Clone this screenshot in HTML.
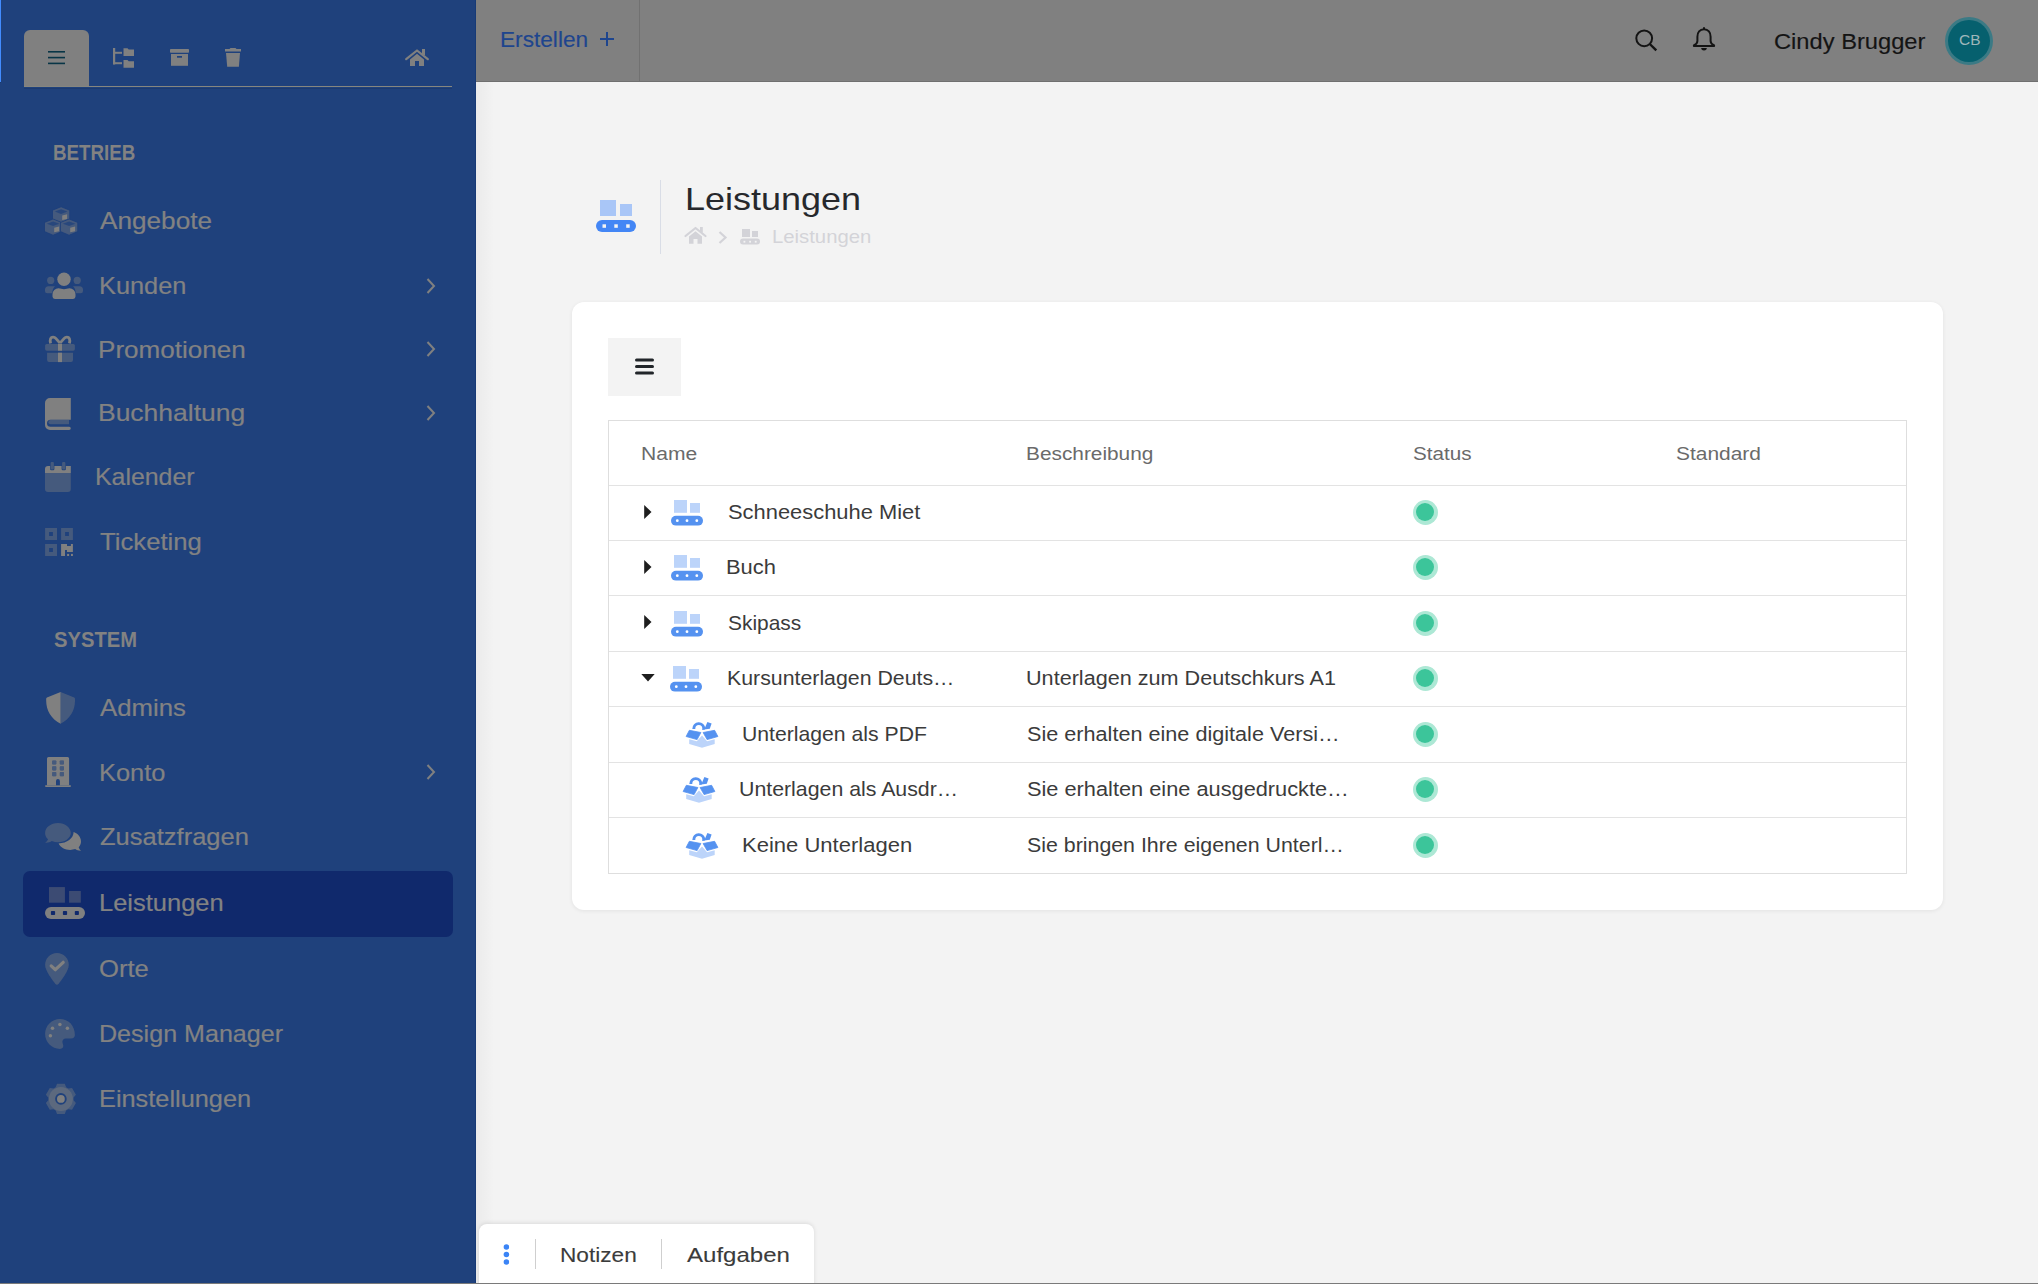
<!DOCTYPE html>
<html><head><meta charset="utf-8"><title>Leistungen</title>
<style>
html,body{margin:0;padding:0;width:2038px;height:1284px;overflow:hidden;background:#f3f3f3;font-family:"Liberation Sans",sans-serif}
.sb{position:absolute;left:0;top:0;width:476px;height:1284px;background:#1f417c}
.t{position:absolute;white-space:nowrap;transform-origin:0 0}
.i{position:absolute;overflow:visible}
</style></head><body>
<div style="position:absolute;left:476px;top:82px;width:18px;height:1202px;background:linear-gradient(to right,rgba(0,0,0,0.035),rgba(0,0,0,0))"></div>
<div class="sb"></div>
<div style="position:absolute;left:475px;top:0;width:1px;height:1284px;background:#173a76"></div>
<div style="position:absolute;left:0;top:0;width:1px;height:82px;background:#428cff"></div><div style="position:absolute;left:0;top:82px;width:1px;height:1px;background:#1a3a70"></div>
<div style="position:absolute;left:24px;top:30px;width:65px;height:57px;background:#808080;border-radius:6px 6px 0 0"></div>
<div style="position:absolute;left:24px;top:86px;width:428px;height:1px;background:#86867f"></div><div style="position:absolute;left:24px;top:88px;width:428px;height:1px;background:#1c3a6f"></div>
<svg class="i" style="left:47px;top:50px" width="19" height="15" viewBox="0 0 19 15" ><g fill="#083546"><rect x="1" y="1" width="17" height="1.6"/><rect x="1" y="6.8" width="17" height="1.6"/><rect x="1" y="12.6" width="17" height="1.6"/></g></svg>
<svg class="i" style="left:112px;top:47px" width="24" height="22" viewBox="0 0 24 22" ><g fill="#808080"><rect x="1" y="1" width="2.2" height="16.5"/><rect x="1" y="4.8" width="9" height="2"/><rect x="1" y="15.2" width="9" height="2"/><path d="M11.5 1.2h4l1.2 1.2h5.3v6.6h-10.5z"/><path d="M11.5 13h4l1.2 1.2h5.3v6.6h-10.5z"/></g></svg>
<svg class="i" style="left:169px;top:48px" width="21" height="19" viewBox="0 0 21 19" ><g fill="#808080"><rect x="1" y="1" width="19" height="3.7" rx="0.8"/><path d="M2 6h17v11.8H2z"/><rect x="8" y="8" width="5" height="1.7" fill="#1f417c"/></g></svg>
<svg class="i" style="left:224px;top:47px" width="18" height="21" viewBox="0 0 18 21" ><g fill="#808080"><path d="M1 2h4.5l1-1h5l1 1h4.5v2.6H1z"/><path d="M2 6h14l-1.1 13.8H3.2z"/></g></svg>
<svg class="i" style="left:405px;top:48px" width="24" height="19" viewBox="0 0 24 19" ><g fill="#808080"><path d="M1.2 11.2 L12 2.5 L22.8 11.2" fill="none" stroke="#808080" stroke-width="2.2" stroke-linecap="round" stroke-linejoin="round"/><rect x="17" y="1" width="3" height="6"/><path d="M5 11.5 L12 5.8 L19 11.5 V18 H14 V13 H10 V18 H5z"/></g></svg>
<svg class="i" style="left:40px;top:200px" width="50" height="40" viewBox="0 0 50 40"><path d="M21.1 7.2 L29.25 10.6 V19.1 L21.1 22.5 L12.950000000000001 19.1 V10.6z" fill="#1f417c" stroke="#1f417c" stroke-width="1.6" stroke-linejoin="round"/><path d="M21.1 7.2 L29.25 10.6 V19.1 L21.1 22.5 L12.950000000000001 19.1 V10.6z" fill="#808080" fill-opacity="0.4"/><path d="M21.1 9.2 L27.400000000000002 11.5 L21.1 13.9 L14.8 11.5z" fill="#1f417c" fill-opacity="0.75"/><path d="M22.200000000000003 15.5 L27.1 14.3 V19.0 L22.200000000000003 20.1z" fill="#808080"/><path d="M13.1 19.4 L21.25 22.799999999999997 V31.299999999999997 L13.1 34.7 L4.949999999999999 31.299999999999997 V22.799999999999997z" fill="#1f417c" stroke="#1f417c" stroke-width="1.6" stroke-linejoin="round"/><path d="M13.1 19.4 L21.25 22.799999999999997 V31.299999999999997 L13.1 34.7 L4.949999999999999 31.299999999999997 V22.799999999999997z" fill="#808080" fill-opacity="0.4"/><path d="M13.1 21.4 L19.4 23.7 L13.1 26.099999999999998 L6.8 23.7z" fill="#1f417c" fill-opacity="0.75"/><path d="M14.2 27.7 L19.1 26.5 V31.2 L14.2 32.3z" fill="#808080"/><path d="M29.1 19.4 L37.25 22.799999999999997 V31.299999999999997 L29.1 34.7 L20.950000000000003 31.299999999999997 V22.799999999999997z" fill="#1f417c" stroke="#1f417c" stroke-width="1.6" stroke-linejoin="round"/><path d="M29.1 19.4 L37.25 22.799999999999997 V31.299999999999997 L29.1 34.7 L20.950000000000003 31.299999999999997 V22.799999999999997z" fill="#808080" fill-opacity="0.4"/><path d="M29.1 21.4 L35.4 23.7 L29.1 26.099999999999998 L22.8 23.7z" fill="#1f417c" fill-opacity="0.75"/><path d="M30.200000000000003 27.7 L35.1 26.5 V31.2 L30.200000000000003 32.3z" fill="#808080"/></svg>
<svg class="i" style="left:40px;top:265px" width="50" height="40" viewBox="0 0 50 40"><g fill="#808080" fill-opacity="0.4"><circle cx="10.7" cy="15.4" r="3.6"/><circle cx="37.2" cy="15.4" r="3.6"/><path d="M8.5 21.2h6.5c-1.6 1.5-2.6 3.5-2.8 7H7.2a2.2 2.2 0 0 1 -2.2-2.2v-1.3a3.5 3.5 0 0 1 3.5-3.5z"/><path d="M39.5 21.2h-6.5c1.6 1.5 2.6 3.5 2.8 7h5a2.2 2.2 0 0 0 2.2-2.2v-1.3a3.5 3.5 0 0 0 -3.5-3.5z"/></g><g fill="#808080"><circle cx="24" cy="14.3" r="6.7"/><path d="M18.5 23.2c2 0 3.5 1 5.5 1s3.5-1 5.5-1a6 6 0 0 1 6 6v2.4a2.4 2.4 0 0 1 -2.4 2.4H14.9a2.4 2.4 0 0 1 -2.4-2.4v-2.4a6 6 0 0 1 6-6z"/></g></svg>
<svg class="i" style="left:40px;top:330px" width="50" height="40" viewBox="0 0 50 40"><g fill="#808080" fill-opacity="0.4"><rect x="5.1" y="13.9" width="29.8" height="6.8" rx="1.6"/><path d="M7.1 22.7h25.9v7.4a2 2 0 0 1 -2 2H9.1a2 2 0 0 1 -2-2z"/></g><g fill="#808080"><rect x="18" y="14" width="4" height="6.7"/><rect x="18" y="22.7" width="4" height="9.4"/><path d="M20 13.2 L15.8 8.3 C14.5 6.8 11.5 6.6 10.6 8.6 C10 10 10.3 12.2 10.6 13.3" fill="none" stroke="#808080" stroke-width="2.8"/><path d="M20 13.2 L24.2 8.3 C25.5 6.8 28.5 6.6 29.4 8.6 C30 10 29.7 12.2 29.4 13.3" fill="none" stroke="#808080" stroke-width="2.8"/></g></svg>
<svg class="i" style="left:40px;top:393px" width="50" height="40" viewBox="0 0 50 40"><path d="M10 5h20.8v21.7H10.5a3.5 3.5 0 0 0 -3.5 3.5 3.5 3.5 0 0 0 3.5 3.5H29.2a1.6 1.6 0 0 1 0 3.2H10a5 5 0 0 1 -5-5V10a5 5 0 0 1 5-5z" fill="#808080"/><path d="M10.5 27.1h18.5v4.1H10.5a2.05 2.05 0 0 1 0-4.1z" fill="#808080" fill-opacity="0.4"/></svg>
<svg class="i" style="left:40px;top:457px" width="50" height="40" viewBox="0 0 50 40"><path d="M5 18h25.8v13.9a3 3 0 0 1 -3 3H8a3 3 0 0 1 -3-3z" fill="#808080" fill-opacity="0.4"/><path d="M8 8.9h22.8a0 0 0 0 1 0 0V16H5V11.9a3 3 0 0 1 3-3z" fill="#808080"/><rect x="10.1" y="4.6" width="4.3" height="8.6" rx="1.2" fill="#1f417c"/><rect x="21.6" y="4.6" width="4.3" height="8.6" rx="1.2" fill="#1f417c"/><rect x="10.6" y="5.1" width="3.3" height="7.5" rx="1" fill="#808080" fill-opacity="0.4"/><rect x="22.1" y="5.1" width="3.3" height="7.5" rx="1" fill="#808080" fill-opacity="0.4"/><path d="M5 16h25.8v2H5z" fill="#808080" fill-opacity="0.4"/></svg>
<svg class="i" style="left:40px;top:522px" width="50" height="40" viewBox="0 0 50 40"><g fill="#808080" fill-opacity="0.4" fill-rule="evenodd"><path d="M5.1 6h11.9v11.9H5.1z M9.1 10v3.9h3.8V10z"/><path d="M21.1 6h11.8v11.9H21.1z M25.1 10v3.9h3.8V10z"/><path d="M5.1 22.1h11.9v11.9H5.1z M9.1 26.1v3.9h3.8v-3.9z"/></g><g fill="#808080"><path d="M21.1 22.1h5.9v1.9h3.9v-1.9h2v7.8H27v-1.9h-2v6h-3.9z"/><rect x="27.1" y="31.9" width="2" height="2.1"/><rect x="31" y="31.9" width="1.9" height="2.1"/></g></svg>
<svg class="i" style="left:40px;top:688px" width="50" height="40" viewBox="0 0 50 40"><path d="M20.6 4 L7 9.6 C6 10 6.2 11 6.2 13 C6.2 22 11 31 20.6 35.8z" fill="#808080"/><path d="M20.6 4 L34.2 9.6 C35.2 10 35 11 35 13 C35 22 30.2 31 20.6 35.8z" fill="#808080" fill-opacity="0.4"/></svg>
<svg class="i" style="left:40px;top:752px" width="50" height="40" viewBox="0 0 50 40"><path d="M8.5 5h19.1a1.5 1.5 0 0 1 1.5 1.5V33.2H7V6.5A1.5 1.5 0 0 1 8.5 5z" fill="#808080"/><rect x="5" y="33.2" width="26" height="1.7" rx="0.8" fill="#808080"/><rect x="12.1" y="8.4" width="4.2" height="4.1" rx="0.8" fill="#1f417c"/><rect x="12.1" y="8.4" width="4.2" height="4.1" rx="0.8" fill="#808080" fill-opacity="0.4"/><rect x="19.8" y="8.4" width="4.2" height="4.1" rx="0.8" fill="#1f417c"/><rect x="19.8" y="8.4" width="4.2" height="4.1" rx="0.8" fill="#808080" fill-opacity="0.4"/><rect x="12.1" y="14.3" width="4.2" height="4.1" rx="0.8" fill="#1f417c"/><rect x="12.1" y="14.3" width="4.2" height="4.1" rx="0.8" fill="#808080" fill-opacity="0.4"/><rect x="19.8" y="14.3" width="4.2" height="4.1" rx="0.8" fill="#1f417c"/><rect x="19.8" y="14.3" width="4.2" height="4.1" rx="0.8" fill="#808080" fill-opacity="0.4"/><rect x="12.1" y="20.1" width="4.2" height="4.1" rx="0.8" fill="#1f417c"/><rect x="12.1" y="20.1" width="4.2" height="4.1" rx="0.8" fill="#808080" fill-opacity="0.4"/><rect x="19.8" y="20.1" width="4.2" height="4.1" rx="0.8" fill="#1f417c"/><rect x="19.8" y="20.1" width="4.2" height="4.1" rx="0.8" fill="#808080" fill-opacity="0.4"/><path d="M16 33.2V29a1.9 1.9 0 0 1 3.9 0v4.2z" fill="#1f417c"/></svg>
<svg class="i" style="left:40px;top:817px" width="50" height="40" viewBox="0 0 50 40"><path d="M18 6.1c-7.1 0-12.9 4.4-12.9 9.9 0 2.4 1.1 4.6 2.9 6.3-.5 1.5-1.6 2.7-2.9 3.4 2.5.3 5-.4 6.7-1.6 1.9.8 4 1.2 6.2 1.2 7.1 0 12.8-4.4 12.8-9.3S25.1 6.1 18 6.1z" fill="#808080" fill-opacity="0.4"/><path d="M33.6 15.1c4.5 1.6 7.4 5.3 7.4 9.3 0 2.2-.8 4.2-2.3 5.8.4 1.4 1.3 2.7 2.3 3.6-2.2.1-4.3-.6-5.8-1.7-1.5.5-3.2.8-5 .8-5.3 0-9.6-2.5-11.6-6.4 8.5-.3 14.9-5 15-11.4z" fill="#808080"/></svg>
<div style="position:absolute;left:23px;top:871px;width:430px;height:66px;background:#10296c;border-radius:7px"></div>
<svg class="i" style="left:40px;top:882px" width="50" height="40" viewBox="0 0 50 40"><rect x="9" y="5.1" width="15.9" height="15.6" fill="#808080" fill-opacity="0.4"/><rect x="29.1" y="9" width="11.7" height="11.7" fill="#808080" fill-opacity="0.4"/><rect x="5" y="24.9" width="40" height="12" rx="6" fill="#808080"/><g fill="#10296c"><rect x="10.9" y="29" width="4.2" height="4" rx="0.8"/><rect x="22.9" y="29" width="4.2" height="4" rx="0.8"/><rect x="34.8" y="29" width="4.1" height="4" rx="0.8"/></g></svg>
<svg class="i" style="left:40px;top:948px" width="50" height="40" viewBox="0 0 50 40"><path d="M17 5.1C10.4 5.1 5.1 10.4 5.1 17c0 5.4 7.4 15.3 10.3 19 .8 1 2.3 1 3.1 0 2.9-3.7 10.3-13.6 10.3-19C28.8 10.4 23.5 5.1 17 5.1z" fill="#808080" fill-opacity="0.4"/><path d="M11.2 17.9 L15.4 21.7 L23.2 14.3" fill="none" stroke="#808080" stroke-width="3.2" stroke-linecap="round" stroke-linejoin="round"/></svg>
<svg class="i" style="left:40px;top:1014px" width="50" height="40" viewBox="0 0 50 40"><path d="M20 5C11.7 5 5.1 11.7 5.1 20c0 8.2 6.7 14.9 14.9 14.9 2.2 0 3.3-1.4 3.3-3.1 0-1.3-.9-2.6-.9-4 0-1.8 1.4-3.2 3.2-3.2h5.4c2.6 0 3.9-1.6 3.9-3.5C34.9 11.3 28.2 5 20 5z" fill="#808080" fill-opacity="0.4"/><g fill="#808080"><circle cx="19.9" cy="10.6" r="1.75"/><circle cx="12.5" cy="14.3" r="1.75"/><circle cx="27.4" cy="14.3" r="1.75"/><circle cx="10.4" cy="21.8" r="1.75"/></g></svg>
<svg class="i" style="left:40px;top:1079px" width="50" height="40" viewBox="0 0 50 40"><polygon points="15.70,8.30 17.00,4.80 24.80,4.80 26.10,8.30 28.35,9.60 32.03,8.97 35.93,15.73 33.55,18.60 33.55,21.20 35.93,24.07 32.03,30.83 28.35,30.20 26.10,31.50 24.80,35.00 17.00,35.00 15.70,31.50 13.45,30.20 9.77,30.83 5.87,24.07 8.25,21.20 8.25,18.60 5.87,15.73 9.77,8.97 13.45,9.60 " fill="#808080" fill-opacity="0.4"/><circle cx="20.9" cy="19.9" r="12" fill="#808080" fill-opacity="0.4"/><circle cx="20.9" cy="19.9" r="5.8" fill="#1f417c"/><circle cx="20.9" cy="19.9" r="3.9" fill="#808080"/></svg>
<svg class="i" style="left:424px;top:277px" width="14" height="18" viewBox="0 0 14 18" ><path d="M3.5 2 L10 9 L3.5 16" fill="none" stroke="#808080" stroke-width="2"/></svg>
<svg class="i" style="left:424px;top:340.4px" width="14" height="18" viewBox="0 0 14 18" ><path d="M3.5 2 L10 9 L3.5 16" fill="none" stroke="#808080" stroke-width="2"/></svg>
<svg class="i" style="left:424px;top:403.6px" width="14" height="18" viewBox="0 0 14 18" ><path d="M3.5 2 L10 9 L3.5 16" fill="none" stroke="#808080" stroke-width="2"/></svg>
<svg class="i" style="left:424px;top:763.2px" width="14" height="18" viewBox="0 0 14 18" ><path d="M3.5 2 L10 9 L3.5 16" fill="none" stroke="#808080" stroke-width="2"/></svg>
<div style="position:absolute;left:476px;top:0;width:1562px;height:81px;background:#808080;border-bottom:1px solid #6f6f6f"></div>
<div style="position:absolute;left:639px;top:0;width:1px;height:81px;background:#717171"></div>
<svg class="i" style="left:598px;top:30px" width="18" height="18" viewBox="0 0 18 18" ><path d="M9 2v14M2 9h14" stroke="#1e458e" stroke-width="2"/></svg>
<svg class="i" style="left:1632px;top:27px" width="28" height="27" viewBox="0 0 28 27" ><circle cx="12.2" cy="11.3" r="7.9" fill="none" stroke="#141414" stroke-width="2"/><path d="M17.8 17l6.5 6.3" stroke="#141414" stroke-width="2.4"/></svg>
<svg class="i" style="left:1690px;top:24px" width="28" height="30" viewBox="0 0 28 30" ><path d="M14 5.3c-4.3 0-6.6 3.2-6.6 7.5v4.1c0 2-1.8 3.6-3.5 4.5v0.6h20.2v-0.6c-1.7-0.9-3.5-2.5-3.5-4.5v-4.1c0-4.3-2.3-7.5-6.6-7.5z" fill="none" stroke="#141414" stroke-width="2" stroke-linejoin="round"/><rect x="13" y="3" width="2" height="3" rx="1" fill="#141414"/><path d="M11.2 24.1h5.6a2.8 2.4 0 0 1 -5.6 0z" fill="#141414"/></svg>
<div style="position:absolute;left:1945px;top:17px;width:48px;height:48px;border-radius:50%;background:#3b7a85"></div>
<div style="position:absolute;left:1948px;top:20px;width:42px;height:42px;border-radius:50%;background:#06606e"></div>
<svg class="i" style="left:595px;top:199px" width="42" height="34" viewBox="0 0 42 34" ><rect x="5" y="1" width="16" height="16" fill="#a9c6f7"/><rect x="25" y="5" width="12" height="12" fill="#a9c6f7"/><rect x="1" y="21" width="40" height="12" rx="6" fill="#4386f5"/><g fill="#f3f3f3"><rect x="7.5" y="25.3" width="3.5" height="3.5"/><rect x="19.3" y="25.3" width="3.5" height="3.5"/><rect x="31.2" y="25.3" width="3.5" height="3.5"/></g></svg>
<div style="position:absolute;left:660px;top:180px;width:1px;height:74px;background:#d9dde6"></div>
<svg class="i" style="left:684px;top:226px" width="24" height="19" viewBox="0 0 24 19" ><g fill="#d3d3d8"><path d="M1.5 10 L11.5 2 L21.5 10" fill="none" stroke="#d3d3d8" stroke-width="2.2" stroke-linecap="round" stroke-linejoin="round"/><rect x="16" y="1" width="2.8" height="5.5"/><path d="M5 10.5 L11.5 5.3 L18 10.5 V17.8 H13.5 V13 H9.5 V17.8 H5z"/></g></svg>
<svg class="i" style="left:716px;top:230px" width="13" height="15" viewBox="0 0 13 15" ><path d="M3.5 2 L9.5 7.5 L3.5 13" fill="none" stroke="#d3d3d8" stroke-width="2.2"/></svg>
<svg class="i" style="left:739px;top:228px" width="23" height="17" viewBox="0 0 23 17" ><g fill="#d3d3d8"><rect x="3" y="1" width="8" height="8"/><rect x="13" y="3" width="6" height="6"/><rect x="1" y="10.5" width="20" height="6" rx="3"/></g><g fill="#f3f3f3"><rect x="4.5" y="12.8" width="1.8" height="1.8"/><rect x="10.2" y="12.8" width="1.8" height="1.8"/><rect x="15.8" y="12.8" width="1.8" height="1.8"/></g></svg>
<div style="position:absolute;left:572px;top:302px;width:1371px;height:608px;background:#fff;border-radius:12px;box-shadow:0 1px 4px rgba(0,0,0,0.07)"></div>
<div style="position:absolute;left:608px;top:338px;width:73px;height:58px;background:#f3f3f3"></div>
<svg class="i" style="left:634px;top:357px" width="22" height="19" viewBox="0 0 22 19" ><g fill="#212529"><rect x="1" y="1.4" width="19" height="3.1" rx="1.5"/><rect x="1" y="7.9" width="19" height="3.1" rx="1.5"/><rect x="1" y="14.4" width="19" height="3.1" rx="1.5"/></g></svg>
<div style="position:absolute;left:608px;top:420px;width:1297px;height:452px;border:1px solid #dedede"></div>
<div style="position:absolute;left:609px;top:485px;width:1297px;height:1px;background:#e3e3e3"></div>
<div style="position:absolute;left:609px;top:540px;width:1297px;height:1px;background:#e3e3e3"></div>
<div style="position:absolute;left:609px;top:595px;width:1297px;height:1px;background:#e3e3e3"></div>
<div style="position:absolute;left:609px;top:651px;width:1297px;height:1px;background:#e3e3e3"></div>
<div style="position:absolute;left:609px;top:706px;width:1297px;height:1px;background:#e3e3e3"></div>
<div style="position:absolute;left:609px;top:762px;width:1297px;height:1px;background:#e3e3e3"></div>
<div style="position:absolute;left:609px;top:817px;width:1297px;height:1px;background:#e3e3e3"></div>
<svg class="i" style="left:670px;top:499.3px" width="34" height="28" viewBox="0 0 34 28" ><rect x="4" y="1" width="13" height="12.8" fill="#bcd4fa"/><rect x="20" y="4" width="10" height="9.8" fill="#bcd4fa"/><rect x="1" y="16.7" width="32" height="9.9" rx="4.95" fill="#5592f0"/><g fill="#fff"><circle cx="7.3" cy="21.65" r="1.4"/><circle cx="17" cy="21.65" r="1.4"/><circle cx="26.8" cy="21.65" r="1.4"/></g></svg>
<svg class="i" style="left:643px;top:503.8px" width="10" height="16" viewBox="0 0 10 16" ><path d="M1.2 1 L8.5 8 L1.2 15z" fill="#1e1e1e"/></svg>
<svg class="i" style="left:670px;top:554.3px" width="34" height="28" viewBox="0 0 34 28" ><rect x="4" y="1" width="13" height="12.8" fill="#bcd4fa"/><rect x="20" y="4" width="10" height="9.8" fill="#bcd4fa"/><rect x="1" y="16.7" width="32" height="9.9" rx="4.95" fill="#5592f0"/><g fill="#fff"><circle cx="7.3" cy="21.65" r="1.4"/><circle cx="17" cy="21.65" r="1.4"/><circle cx="26.8" cy="21.65" r="1.4"/></g></svg>
<svg class="i" style="left:643px;top:558.8px" width="10" height="16" viewBox="0 0 10 16" ><path d="M1.2 1 L8.5 8 L1.2 15z" fill="#1e1e1e"/></svg>
<svg class="i" style="left:670px;top:609.8px" width="34" height="28" viewBox="0 0 34 28" ><rect x="4" y="1" width="13" height="12.8" fill="#bcd4fa"/><rect x="20" y="4" width="10" height="9.8" fill="#bcd4fa"/><rect x="1" y="16.7" width="32" height="9.9" rx="4.95" fill="#5592f0"/><g fill="#fff"><circle cx="7.3" cy="21.65" r="1.4"/><circle cx="17" cy="21.65" r="1.4"/><circle cx="26.8" cy="21.65" r="1.4"/></g></svg>
<svg class="i" style="left:643px;top:614.3px" width="10" height="16" viewBox="0 0 10 16" ><path d="M1.2 1 L8.5 8 L1.2 15z" fill="#1e1e1e"/></svg>
<svg class="i" style="left:669px;top:664.9px" width="34" height="28" viewBox="0 0 34 28" ><rect x="4" y="1" width="13" height="12.8" fill="#bcd4fa"/><rect x="20" y="4" width="10" height="9.8" fill="#bcd4fa"/><rect x="1" y="16.7" width="32" height="9.9" rx="4.95" fill="#5592f0"/><g fill="#fff"><circle cx="7.3" cy="21.65" r="1.4"/><circle cx="17" cy="21.65" r="1.4"/><circle cx="26.8" cy="21.65" r="1.4"/></g></svg>
<svg class="i" style="left:640px;top:672px" width="16" height="11" viewBox="0 0 16 11" ><path d="M1.3 2 H14.7 L8 9.5z" fill="#1e1e1e"/></svg>
<svg class="i" style="left:680px;top:715px" width="45" height="40" viewBox="0 0 45 40" ><path d="M9.35 15.3 L20.9 17.5 L17.1 24.6 L6.1 21.5z" fill="#5592f0" stroke="#5592f0" stroke-width="0.8" stroke-linejoin="round"/><path d="M23.1 17.5 L34.6 15.3 L37.9 21.5 L27.1 24.6z" fill="#5592f0" stroke="#5592f0" stroke-width="0.8" stroke-linejoin="round"/><path d="M9.2 24.3 L16.8 26.2 L22 20.6 L27.1 26.2 L34.7 24.3 V29 L22 32.7 L9.2 29z" fill="#bcd4fa"/><path d="M12.3 13.9 A6.5 6.5 0 0 1 25.3 13.5 L24.6 14.7 L22.2 14.9 L22.3 13.5 A3.5 3.5 0 0 0 15.3 13.5 L15.3 13.9z" fill="#5592f0"/><path d="M27.4 7.1 L31.6 8.4 L29.8 13.8 L24.2 14.6z" fill="#5592f0"/></svg>
<svg class="i" style="left:677px;top:770.3px" width="45" height="40" viewBox="0 0 45 40" ><path d="M9.35 15.3 L20.9 17.5 L17.1 24.6 L6.1 21.5z" fill="#5592f0" stroke="#5592f0" stroke-width="0.8" stroke-linejoin="round"/><path d="M23.1 17.5 L34.6 15.3 L37.9 21.5 L27.1 24.6z" fill="#5592f0" stroke="#5592f0" stroke-width="0.8" stroke-linejoin="round"/><path d="M9.2 24.3 L16.8 26.2 L22 20.6 L27.1 26.2 L34.7 24.3 V29 L22 32.7 L9.2 29z" fill="#bcd4fa"/><path d="M12.3 13.9 A6.5 6.5 0 0 1 25.3 13.5 L24.6 14.7 L22.2 14.9 L22.3 13.5 A3.5 3.5 0 0 0 15.3 13.5 L15.3 13.9z" fill="#5592f0"/><path d="M27.4 7.1 L31.6 8.4 L29.8 13.8 L24.2 14.6z" fill="#5592f0"/></svg>
<svg class="i" style="left:680px;top:826px" width="45" height="40" viewBox="0 0 45 40" ><path d="M9.35 15.3 L20.9 17.5 L17.1 24.6 L6.1 21.5z" fill="#5592f0" stroke="#5592f0" stroke-width="0.8" stroke-linejoin="round"/><path d="M23.1 17.5 L34.6 15.3 L37.9 21.5 L27.1 24.6z" fill="#5592f0" stroke="#5592f0" stroke-width="0.8" stroke-linejoin="round"/><path d="M9.2 24.3 L16.8 26.2 L22 20.6 L27.1 26.2 L34.7 24.3 V29 L22 32.7 L9.2 29z" fill="#bcd4fa"/><path d="M12.3 13.9 A6.5 6.5 0 0 1 25.3 13.5 L24.6 14.7 L22.2 14.9 L22.3 13.5 A3.5 3.5 0 0 0 15.3 13.5 L15.3 13.9z" fill="#5592f0"/><path d="M27.4 7.1 L31.6 8.4 L29.8 13.8 L24.2 14.6z" fill="#5592f0"/></svg>
<div style="position:absolute;left:1412.5px;top:499.5px;width:25px;height:25px;border-radius:50%;background:#ade8d5"></div>
<div style="position:absolute;left:1416px;top:503px;width:18px;height:18px;border-radius:50%;background:#3cc59a"></div>
<div style="position:absolute;left:1412.5px;top:554.5px;width:25px;height:25px;border-radius:50%;background:#ade8d5"></div>
<div style="position:absolute;left:1416px;top:558px;width:18px;height:18px;border-radius:50%;background:#3cc59a"></div>
<div style="position:absolute;left:1412.5px;top:610.5px;width:25px;height:25px;border-radius:50%;background:#ade8d5"></div>
<div style="position:absolute;left:1416px;top:614px;width:18px;height:18px;border-radius:50%;background:#3cc59a"></div>
<div style="position:absolute;left:1412.5px;top:665.5px;width:25px;height:25px;border-radius:50%;background:#ade8d5"></div>
<div style="position:absolute;left:1416px;top:669px;width:18px;height:18px;border-radius:50%;background:#3cc59a"></div>
<div style="position:absolute;left:1412.5px;top:721.5px;width:25px;height:25px;border-radius:50%;background:#ade8d5"></div>
<div style="position:absolute;left:1416px;top:725px;width:18px;height:18px;border-radius:50%;background:#3cc59a"></div>
<div style="position:absolute;left:1412.5px;top:776.5px;width:25px;height:25px;border-radius:50%;background:#ade8d5"></div>
<div style="position:absolute;left:1416px;top:780px;width:18px;height:18px;border-radius:50%;background:#3cc59a"></div>
<div style="position:absolute;left:1412.5px;top:832.5px;width:25px;height:25px;border-radius:50%;background:#ade8d5"></div>
<div style="position:absolute;left:1416px;top:836px;width:18px;height:18px;border-radius:50%;background:#3cc59a"></div>
<div style="position:absolute;left:479px;top:1224px;width:335px;height:70px;background:#fff;border-radius:8px;box-shadow:0 -1px 4px rgba(0,0,0,0.10)"></div>
<svg class="i" style="left:502px;top:1243px" width="9" height="24" viewBox="0 0 9 24" ><g fill="#3b84f6"><circle cx="4.4" cy="4.1" r="2.75"/><circle cx="4.4" cy="11.5" r="2.75"/><circle cx="4.4" cy="18.9" r="2.75"/></g></svg>
<div style="position:absolute;left:534.5px;top:1239px;width:1px;height:30px;background:#cfcfcf"></div>
<div style="position:absolute;left:661.2px;top:1239px;width:1px;height:30px;background:#cfcfcf"></div>
<div style="position:absolute;left:0;top:1283px;width:2038px;height:1px;background:#7a7a7a"></div>
<div class="t" style="left:53.24px;top:141.9px;font-size:21.7px;line-height:21.7px;transform:scaleX(0.8650);color:#828282;font-weight:700;">BETRIEB</div>
<div class="t" style="left:100.00px;top:209.9px;font-size:23.1px;line-height:23.1px;transform:scaleX(1.1332);color:#828282;font-weight:400;-webkit-text-stroke:0.2px #828282;">Angebote</div>
<div class="t" style="left:99.11px;top:274.8px;font-size:23.2px;line-height:23.2px;transform:scaleX(1.0929);color:#828282;font-weight:400;-webkit-text-stroke:0.2px #828282;">Kunden</div>
<div class="t" style="left:98.48px;top:338.8px;font-size:23.2px;line-height:23.2px;transform:scaleX(1.1237);color:#828282;font-weight:400;-webkit-text-stroke:0.2px #828282;">Promotionen</div>
<div class="t" style="left:98.46px;top:401.8px;font-size:23.2px;line-height:23.2px;transform:scaleX(1.1415);color:#828282;font-weight:400;-webkit-text-stroke:0.2px #828282;">Buchhaltung</div>
<div class="t" style="left:95.23px;top:465.8px;font-size:23.2px;line-height:23.2px;transform:scaleX(1.0728);color:#828282;font-weight:400;-webkit-text-stroke:0.2px #828282;">Kalender</div>
<div class="t" style="left:99.60px;top:530.8px;font-size:23.2px;line-height:23.2px;transform:scaleX(1.1085);color:#828282;font-weight:400;-webkit-text-stroke:0.2px #828282;">Ticketing</div>
<div class="t" style="left:53.50px;top:629.3px;font-size:21.7px;line-height:21.7px;transform:scaleX(0.9307);color:#828282;font-weight:700;">SYSTEM</div>
<div class="t" style="left:99.90px;top:696.8px;font-size:23.2px;line-height:23.2px;transform:scaleX(1.1118);color:#828282;font-weight:400;-webkit-text-stroke:0.2px #828282;">Admins</div>
<div class="t" style="left:98.80px;top:761.8px;font-size:23.2px;line-height:23.2px;transform:scaleX(1.0954);color:#828282;font-weight:400;-webkit-text-stroke:0.2px #828282;">Konto</div>
<div class="t" style="left:99.90px;top:825.8px;font-size:23.2px;line-height:23.2px;transform:scaleX(1.1001);color:#828282;font-weight:400;-webkit-text-stroke:0.2px #828282;">Zusatzfragen</div>
<div class="t" style="left:98.90px;top:891.8px;font-size:23.2px;line-height:23.2px;transform:scaleX(1.0989);color:#828282;font-weight:400;-webkit-text-stroke:0.2px #828282;">Leistungen</div>
<div class="t" style="left:98.90px;top:957.8px;font-size:23.2px;line-height:23.2px;transform:scaleX(1.1042);color:#828282;font-weight:400;-webkit-text-stroke:0.2px #828282;">Orte</div>
<div class="t" style="left:98.92px;top:1022.8px;font-size:23.2px;line-height:23.2px;transform:scaleX(1.0820);color:#828282;font-weight:400;-webkit-text-stroke:0.2px #828282;">Design Manager</div>
<div class="t" style="left:98.91px;top:1087.8px;font-size:23.2px;line-height:23.2px;transform:scaleX(1.0923);color:#828282;font-weight:400;-webkit-text-stroke:0.2px #828282;">Einstellungen</div>
<div class="t" style="left:499.95px;top:28.9px;font-size:21.6px;line-height:21.6px;transform:scaleX(1.0487);color:#1e458e;font-weight:400;-webkit-text-stroke:0.15px #1e458e;">Erstellen</div>
<div class="t" style="left:1773.59px;top:31.6px;font-size:21.3px;line-height:21.3px;transform:scaleX(1.1123);color:#141414;font-weight:400;-webkit-text-stroke:0.15px #141414;">Cindy Brugger</div>
<div class="t" style="left:1958.80px;top:32.3px;font-size:15.4px;line-height:15.4px;transform:scaleX(1.0040);color:#9fb6ba;font-weight:400;">CB</div>
<div class="t" style="left:684.75px;top:182.9px;font-size:32.0px;line-height:32.0px;transform:scaleX(1.1238);color:#26282c;font-weight:400;">Leistungen</div>
<div class="t" style="left:771.88px;top:227.9px;font-size:18.1px;line-height:18.1px;transform:scaleX(1.1218);color:#d3d3d8;font-weight:400;">Leistungen</div>
<div class="t" style="left:640.60px;top:444.0px;font-size:19.1px;line-height:19.1px;transform:scaleX(1.1032);color:#6a6a6a;font-weight:400;">Name</div>
<div class="t" style="left:1026.41px;top:444.0px;font-size:19.1px;line-height:19.1px;transform:scaleX(1.0908);color:#6a6a6a;font-weight:400;">Beschreibung</div>
<div class="t" style="left:1413.00px;top:444.0px;font-size:19.1px;line-height:19.1px;transform:scaleX(1.0824);color:#6a6a6a;font-weight:400;">Status</div>
<div class="t" style="left:1675.80px;top:443.7px;font-size:19.1px;line-height:19.1px;transform:scaleX(1.0966);color:#6a6a6a;font-weight:400;">Standard</div>
<div class="t" style="left:727.60px;top:502.8px;font-size:19.4px;line-height:19.4px;transform:scaleX(1.1292);color:#3b3b3b;font-weight:400;">Schneeschuhe Miet</div>
<div class="t" style="left:726.47px;top:557.8px;font-size:19.4px;line-height:19.4px;transform:scaleX(1.1294);color:#3b3b3b;font-weight:400;">Buch</div>
<div class="t" style="left:727.60px;top:613.8px;font-size:19.8px;line-height:19.8px;transform:scaleX(1.0566);color:#3b3b3b;font-weight:400;">Skipass</div>
<div class="t" style="left:726.50px;top:668.8px;font-size:19.4px;line-height:19.4px;transform:scaleX(1.0990);color:#3b3b3b;font-weight:400;">Kursunterlagen Deuts…</div>
<div class="t" style="left:741.73px;top:724.8px;font-size:19.8px;line-height:19.8px;transform:scaleX(1.0710);color:#3b3b3b;font-weight:400;">Unterlagen als PDF</div>
<div class="t" style="left:739.12px;top:779.8px;font-size:19.8px;line-height:19.8px;transform:scaleX(1.0772);color:#3b3b3b;font-weight:400;">Unterlagen als Ausdr…</div>
<div class="t" style="left:741.66px;top:835.8px;font-size:19.4px;line-height:19.4px;transform:scaleX(1.1354);color:#3b3b3b;font-weight:400;">Keine Unterlagen</div>
<div class="t" style="left:1025.89px;top:668.8px;font-size:19.4px;line-height:19.4px;transform:scaleX(1.1145);color:#3b3b3b;font-weight:400;">Unterlagen zum Deutschkurs A1</div>
<div class="t" style="left:1027.00px;top:724.8px;font-size:19.4px;line-height:19.4px;transform:scaleX(1.1157);color:#3b3b3b;font-weight:400;">Sie erhalten eine digitale Versi…</div>
<div class="t" style="left:1027.00px;top:779.8px;font-size:19.4px;line-height:19.4px;transform:scaleX(1.1226);color:#3b3b3b;font-weight:400;">Sie erhalten eine ausgedruckte…</div>
<div class="t" style="left:1027.00px;top:835.8px;font-size:19.4px;line-height:19.4px;transform:scaleX(1.1009);color:#3b3b3b;font-weight:400;">Sie bringen Ihre eigenen Unterl…</div>
<div class="t" style="left:559.92px;top:1243.7px;font-size:21.0px;line-height:21.0px;transform:scaleX(1.0788);color:#3b3b3b;font-weight:400;-webkit-text-stroke:0.1px #3b3b3b;">Notizen</div>
<div class="t" style="left:687.20px;top:1243.7px;font-size:21.0px;line-height:21.0px;transform:scaleX(1.1453);color:#3b3b3b;font-weight:400;-webkit-text-stroke:0.1px #3b3b3b;">Aufgaben</div>
</body></html>
